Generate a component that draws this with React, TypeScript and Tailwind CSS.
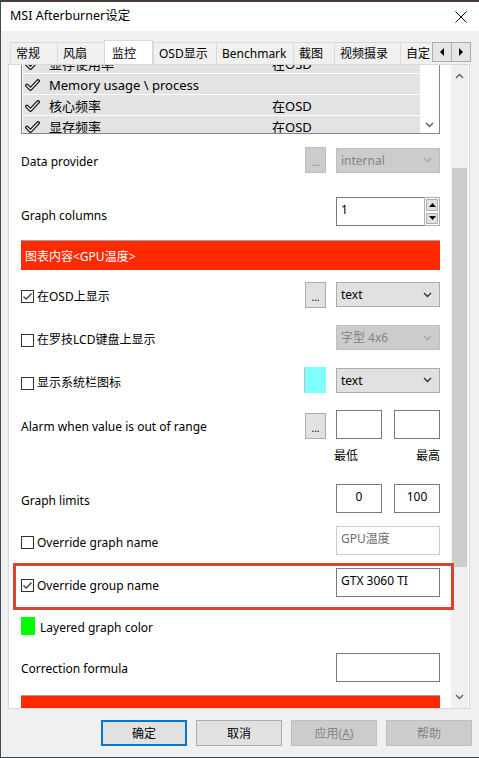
import React from "react";

const FONT = "font-['Noto_Sans','Noto_Sans_CJK_SC',sans-serif]";

const TABS = [
  { label: "常规", w: "w-[47px]" },
  { label: "风扇", w: "w-[47px]" },
  { label: "监控", w: "w-[49px]", active: true },
  { label: "OSD显示", w: "w-[63px]" },
  { label: "Benchmark", w: "w-[77px]" },
  { label: "截图", w: "w-[41px]" },
  { label: "视频摄录", w: "w-[66px]" },
  { label: "自定", w: "w-[31px]" },
];

const SOURCES = [
  { name: "显存使用率", osd: "在OSD" },
  { name: "Memory usage \\ process", osd: "" },
  { name: "核心频率", osd: "在OSD" },
  { name: "显存频率", osd: "在OSD" },
];

function ListCheck() {
  return (
    <svg width="15" height="12" viewBox="0 0 15 12">
      <path d="M2 6.5 L5.5 10 L13 2" fill="none" stroke="#1a1a1a" strokeWidth="3.8" strokeLinecap="round" strokeLinejoin="round" />
      <path d="M2 6.5 L5.5 10 L13 2" fill="none" stroke="#ffffff" strokeWidth="1.1" strokeLinecap="round" strokeLinejoin="round" />
    </svg>
  );
}

function Chevron({ up = false, color = "#606060" }: { up?: boolean; color?: string }) {
  return (
    <svg width="9" height="6" viewBox="0 0 9 6">
      <path d={up ? "M1 5 L4.5 1.5 L8 5" : "M1 1 L4.5 4.5 L8 1"} fill="none" stroke={color} strokeWidth="1.4" />
    </svg>
  );
}

function Checkbox({ checked = false }: { checked?: boolean }) {
  return (
    <div className="w-[13px] h-[13px] border border-[#333333] bg-white flex items-center justify-center shrink-0">
      {checked && (
        <svg width="11" height="11" viewBox="0 0 11 11">
          <path d="M1.5 5.5 L4.2 8.2 L9.5 2.5" fill="none" stroke="#333333" strokeWidth="1.2" />
        </svg>
      )}
    </div>
  );
}

function Dots({ disabled = false }: { disabled?: boolean }) {
  return (
    <div
      className={`w-[21px] h-[26px] border flex items-end justify-center pb-[5px] text-[10px] leading-none ${
        disabled ? "bg-[#cccccc] border-[#bfbfbf] text-[#838383]" : "bg-[#e1e1e1] border-[#adadad] text-black"
      }`}
    >
      ...
    </div>
  );
}

function Select({ value, disabled = false }: { value: string; disabled?: boolean }) {
  return (
    <div
      className={`w-[104px] h-[25px] border flex items-center justify-between pl-[4px] pr-[7px] ${
        disabled ? "bg-[#cccccc] border-[#bfbfbf] text-[#838383]" : "bg-[#e1e1e1] border-[#adadad] text-black"
      }`}
    >
      <span className="pt-[1px]">{value}</span>
      <Chevron color={disabled ? "#a8a8a8" : "#333333"} />
    </div>
  );
}

function Field({
  value = "",
  w = "w-[104px]",
  center = false,
  disabled = false,
}: {
  value?: string;
  w?: string;
  center?: boolean;
  disabled?: boolean;
}) {
  return (
    <div
      className={`${w} h-[29px] border bg-white pt-[3px] ${center ? "text-center" : "pl-[4px]"} ${
        disabled ? "border-[#cccccc] text-[#6d6d6d]" : "border-[#7a7a7a] text-black"
      }`}
    >
      {value}
    </div>
  );
}

function SpinArrow({ up }: { up: boolean }) {
  return (
    <div className="flex-1 m-[1px] border border-[#adadad] bg-[#e1e1e1] flex items-center justify-center">
      <svg width="7" height="4" viewBox="0 0 7 4">
        <path d={up ? "M0 4 L3.5 0 L7 4 Z" : "M0 0 L3.5 4 L7 0 Z"} fill="#000" />
      </svg>
    </div>
  );
}

function Separator({ mt }: { mt: string }) {
  return <div className={`${mt} h-px bg-[#a0a0a0] ml-[2px] mr-[3px]`} />;
}

export default function App() {
  return (
    <div className={`${FONT} text-[12px] text-black w-[479px] h-[758px] bg-[#f0f0f0] border-l border-b border-[#3d4a52] relative overflow-hidden flex flex-col`}>
      {/* title bar */}
      <div className="h-[31px] bg-white border-t-2 border-[#4a3a3a] flex items-center justify-between pl-[9px] pr-[12px] shrink-0">
        <span className="text-[12.5px]">MSI Afterburner设定</span>
        <svg width="12" height="12" viewBox="0 0 12 12">
          <path d="M0.5 0.5 L11.5 11.5 M11.5 0.5 L0.5 11.5" stroke="#000" strokeWidth="1" />
        </svg>
      </div>

      {/* tabs */}
      <div className="mt-[9px] h-[24px] flex items-end pl-[9px] shrink-0">
        <div className="w-[422px] h-[25px] flex items-end overflow-hidden">
          {TABS.map((t) =>
            t.active ? (
              <div
                key={t.label}
                className={`${t.w} h-[25px] shrink-0 bg-white border-x border-t border-[#d9d9d9] pl-[7px] pt-[5px] leading-[16px] whitespace-nowrap relative top-px z-10`}
              >
                {t.label}
              </div>
            ) : (
              <div
                key={t.label}
                className={`${t.w} h-[22px] shrink-0 bg-[#f0f0f0] border-l border-t border-[#d9d9d9] pl-[5px] pt-[3px] leading-[16px] whitespace-nowrap overflow-hidden`}
              >
                {t.label}
              </div>
            )
          )}
        </div>
        <div className="flex self-start mt-[2px]">
          {["M5 0 L1 4 L5 8 Z", "M1 0 L5 4 L1 8 Z"].map((d) => (
            <div key={d} className="w-[20px] h-[20px] border border-[#adadad] bg-[#e5e5e5] -ml-px first:ml-0 flex items-center justify-center">
              <svg width="6" height="8" viewBox="0 0 6 8">
                <path d={d} fill="#000" />
              </svg>
            </div>
          ))}
        </div>
      </div>

      {/* tab page */}
      <div className="ml-[7px] w-[462px] h-[645px] border border-[#d9d9d9] bg-white flex shrink-0">
        <div className="w-[442px] h-full overflow-hidden pl-[12px] pr-[11px] flex flex-col">
          {/* source list */}
          <div className="h-[69px] shrink-0 border-x border-b border-[#828790] flex overflow-hidden">
            <div className="w-[398px] pl-px flex flex-col gap-px">
              {SOURCES.map((s, i) => (
                <div
                  key={s.name}
                  className={`h-[20px] shrink-0 bg-[#e3e3e3] grid grid-cols-[26px_223px_1fr] items-center text-[13px] ${i === 0 ? "-mt-[12px]" : ""}`}
                >
                  <div className="pl-[2px] flex items-center">
                    <ListCheck />
                  </div>
                  <span className="whitespace-nowrap pt-[2px]">{s.name}</span>
                  <span className="pt-[2px]">{s.osd}</span>
                </div>
              ))}
            </div>
            <div className="flex-1 flex items-end justify-center pb-[5px]">
              <Chevron />
            </div>
          </div>

          {/* data provider */}
          <div className="mt-[13px] h-[26px] flex items-center shrink-0">
            <span className="flex-1 pt-[4px]">Data provider</span>
            <div className="flex items-center gap-[10px]">
              <Dots disabled />
              <Select value="internal" disabled />
            </div>
          </div>

          <Separator mt="mt-[15px]" />

          {/* graph columns */}
          <div className="mt-[9px] h-[29px] flex items-center shrink-0">
            <span className="flex-1 pt-[9px]">Graph columns</span>
            <div className="w-[104px] h-[29px] flex">
              <div className="flex-1 border border-r-0 border-[#7a7a7a] pl-[4px] pt-[3px]">1</div>
              <div className="w-[16px] border border-[#adadad] flex flex-col">
                <SpinArrow up />
                <SpinArrow up={false} />
              </div>
            </div>
          </div>

          {/* graph header */}
          <div className="mt-[14px] h-[30px] shrink-0 border-t border-[#a0a0a0] bg-[#ff2a00] text-white flex items-center pl-[4px] pt-[2px]">
            图表内容&lt;GPU温度&gt;
          </div>

          {/* show in OSD */}
          <div className="mt-[12px] h-[25px] flex items-center shrink-0">
            <div className="flex-1 flex items-center gap-[3px] pt-[4px]">
              <Checkbox checked />
              <span>在OSD上显示</span>
            </div>
            <div className="flex items-center gap-[10px]">
              <Dots />
              <Select value="text" />
            </div>
          </div>

          {/* LCD */}
          <div className="mt-[18px] h-[25px] flex items-center shrink-0">
            <div className="flex-1 flex items-center gap-[3px] pt-[5px]">
              <Checkbox />
              <span>在罗技LCD键盘上显示</span>
            </div>
            <Select value="字型 4x6" disabled />
          </div>

          {/* tray icon */}
          <div className="mt-[17px] h-[26px] flex items-center shrink-0">
            <div className="flex-1 flex items-center gap-[3px] pt-[6px]">
              <Checkbox />
              <span>显示系统栏图标</span>
            </div>
            <div className="flex items-center gap-[10px]">
              <div className="w-[22px] h-[26px] bg-[#80ffff] border-l border-[#c0c0c0]" />
              <Select value="text" />
            </div>
          </div>

          {/* alarm */}
          <div className="mt-[17px] h-[29px] flex items-start shrink-0">
            <span className="flex-1 pt-[8px]">Alarm when value is out of range</span>
            <div className="flex items-start gap-[10px]">
              <div className="mt-[3px]">
                <Dots />
              </div>
              <div className="flex gap-[12px]">
                <Field w="w-[46px]" />
                <Field w="w-[46px]" />
              </div>
            </div>
          </div>
          <div className="mt-[8px] h-[16px] flex justify-end gap-[58px] shrink-0">
            <span>最低</span>
            <span>最高</span>
          </div>

          <Separator mt="mt-[11px]" />

          {/* graph limits */}
          <div className="mt-[10px] h-[28px] flex items-center shrink-0">
            <span className="flex-1 pt-[5px]">Graph limits</span>
            <div className="flex gap-[12px]">
              <Field w="w-[46px] h-[28px]" value="0" center />
              <Field w="w-[46px] h-[28px]" value="100" center />
            </div>
          </div>

          {/* override graph name */}
          <div className="mt-[14px] h-[29px] flex items-center shrink-0">
            <div className="flex-1 flex items-center gap-[3px] pt-[4px]">
              <Checkbox />
              <span>Override graph name</span>
            </div>
            <Field value="GPU温度" disabled />
          </div>

          {/* override group name */}
          <div className="mt-[13px] h-[29px] flex items-center shrink-0">
            <div className="flex-1 flex items-center gap-[3px] pt-[6px]">
              <Checkbox checked />
              <span>Override group name</span>
            </div>
            <Field value="GTX 3060 TI" />
          </div>

          {/* layered color */}
          <div className="mt-[20px] h-[18px] flex items-center gap-[5px] shrink-0">
            <div className="w-[14px] h-[18px] bg-[#00ff00]" />
            <span className="pt-[3px]">Layered graph color</span>
          </div>

          {/* correction formula */}
          <div className="mt-[18px] h-[29px] flex items-center shrink-0">
            <span className="flex-1 pt-[3px]">Correction formula</span>
            <Field />
          </div>

          <div className="mt-[13px] h-[30px] shrink-0 border-t border-[#a0a0a0] bg-[#ff2a00]" />
        </div>

        {/* page scrollbar */}
        <div className="w-[17px] h-full bg-[#f0f0f0] flex flex-col items-center">
          <div className="h-[22px] flex items-center justify-center">
            <Chevron up />
          </div>
          <div className="mt-[81px] w-[15px] h-[399px] bg-[#cdcdcd]" />
          <div className="flex-1" />
          <div className="h-[22px] flex items-center justify-center">
            <Chevron />
          </div>
        </div>
      </div>

      {/* dialog buttons */}
      <div className="mt-[11px] h-[26px] flex pl-[100px] gap-[9px] shrink-0">
        <div className="w-[86px] h-[26px] bg-[#e1e1e1] border-2 border-[#0078d7] flex items-center justify-center pt-[2px]">确定</div>
        <div className="w-[86px] h-[26px] bg-[#e1e1e1] border border-[#adadad] flex items-center justify-center pt-[2px]">取消</div>
        <div className="w-[86px] h-[26px] bg-[#cccccc] border border-[#bfbfbf] text-[#838383] flex items-center justify-center pt-[2px]">
          应用(<span className="underline">A</span>)
        </div>
        <div className="w-[86px] h-[26px] bg-[#cccccc] border border-[#bfbfbf] text-[#838383] flex items-center justify-center pt-[2px]">帮助</div>
      </div>

      {/* highlight frame drawn over the group name row */}
      <div className="absolute left-[12px] top-[563px] w-[441px] h-[47px] border-[3px] border-[#d9452d]" />
    </div>
  );
}
